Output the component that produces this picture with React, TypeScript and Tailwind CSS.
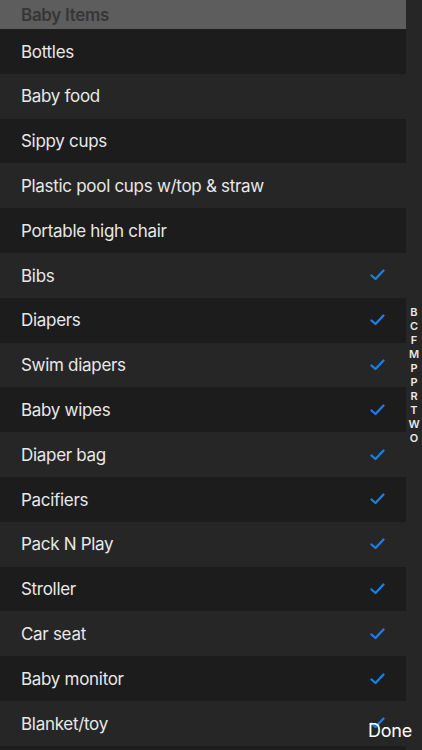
import React from "react";

const items: { name: string; checked: boolean }[] = [
  { name: "Bottles", checked: false },
  { name: "Baby food", checked: false },
  { name: "Sippy cups", checked: false },
  { name: "Plastic pool cups w/top & straw", checked: false },
  { name: "Portable high chair", checked: false },
  { name: "Bibs", checked: true },
  { name: "Diapers", checked: true },
  { name: "Swim diapers", checked: true },
  { name: "Baby wipes", checked: true },
  { name: "Diaper bag", checked: true },
  { name: "Pacifiers", checked: true },
  { name: "Pack N Play", checked: true },
  { name: "Stroller", checked: true },
  { name: "Car seat", checked: true },
  { name: "Baby monitor", checked: true },
  { name: "Blanket/toy", checked: true },
  { name: "", checked: false },
];

const letters = ["B", "C", "F", "M", "P", "P", "R", "T", "W", "O"];

function Check() {
  return (
    <svg width="15" height="12" viewBox="0 0 15 12" fill="none">
      <path
        d="M1.5 6.5 L5.5 10 L13.5 1.5"
        stroke="#1c7fe6"
        strokeWidth="2.3"
        strokeLinecap="round"
        strokeLinejoin="round"
      />
    </svg>
  );
}

export default function App() {
  return (
    <div
      className="relative w-[422px] h-[750px] overflow-hidden bg-[#262626]"
      style={{ fontFamily: "Inter, 'Noto Sans', sans-serif" }}
    >
      <div className="w-[406px] flex flex-col">
        <div className="h-[29px] bg-[#5d5d5d] flex items-center pl-[21px] pt-[2px]">
          <span className="text-[17px] font-semibold tracking-[-0.3px] text-[#363636]">Baby Items</span>
        </div>
        {items.map((it, i) => (
          <div
            key={i}
            className={`h-[44.8px] shrink-0 flex items-center justify-between pl-[21px] pr-[21px] ${
              i % 2 === 0 ? "bg-[#1c1c1c]" : "bg-[#262626]"
            }`}
          >
            <span className="pt-[2px] text-[17px] tracking-[-0.3px] text-[#e8e8e8]">{it.name}</span>
            {it.checked && <Check />}
          </div>
        ))}
      </div>
      <div className="absolute left-[406px] top-[305px] w-[16px] flex flex-col items-center">
        {letters.map((l, i) => (
          <span key={i} className="h-[14px] leading-[14px] text-[11px] font-semibold text-[#e8e8e8]">
            {l}
          </span>
        ))}
      </div>
      <div className="absolute right-[10px] top-[719px] text-[18px] tracking-[-0.2px] text-white leading-[24px]">Done</div>
    </div>
  );
}
